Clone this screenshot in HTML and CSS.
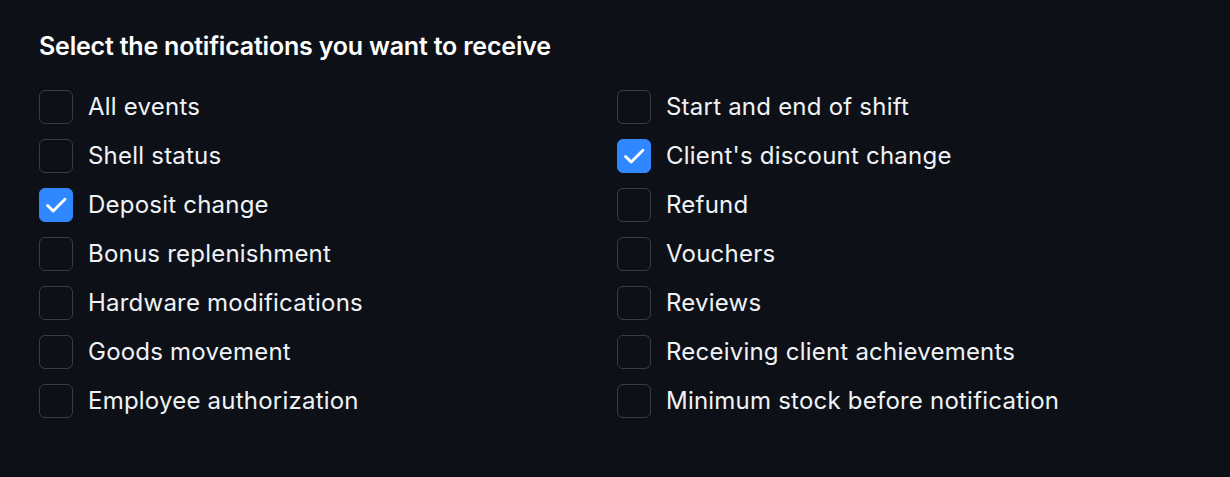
FILE: index.html
```html
<!DOCTYPE html>
<html>
<head>
<meta charset="utf-8">
<link rel="stylesheet" href="styles.css">
</head>
<body>
<div class="panel">
  <h2 class="title">Select the notifications you want to receive</h2>
  <div class="grid">
    <div class="col">
      <label class="item"><span class="box"></span><span class="text">All events</span></label>
      <label class="item"><span class="box"></span><span class="text">Shell status</span></label>
      <label class="item"><span class="box checked"><svg viewBox="0 0 34 34"><path d="M8 17.5l6 6L26.5 11" /></svg></span><span class="text">Deposit change</span></label>
      <label class="item"><span class="box"></span><span class="text">Bonus replenishment</span></label>
      <label class="item"><span class="box"></span><span class="text">Hardware modifications</span></label>
      <label class="item"><span class="box"></span><span class="text">Goods movement</span></label>
      <label class="item"><span class="box"></span><span class="text">Employee authorization</span></label>
    </div>
    <div class="col">
      <label class="item"><span class="box"></span><span class="text">Start and end of shift</span></label>
      <label class="item"><span class="box checked"><svg viewBox="0 0 34 34"><path d="M8 17.5l6 6L26.5 11" /></svg></span><span class="text">Client's discount change</span></label>
      <label class="item"><span class="box"></span><span class="text">Refund</span></label>
      <label class="item"><span class="box"></span><span class="text">Vouchers</span></label>
      <label class="item"><span class="box"></span><span class="text">Reviews</span></label>
      <label class="item"><span class="box"></span><span class="text">Receiving client achievements</span></label>
      <label class="item"><span class="box"></span><span class="text">Minimum stock before notification</span></label>
    </div>
  </div>
</div>
</body>
</html>
```
FILE: styles.css
```css
html, body {
  margin: 0;
  padding: 0;
  background: #0d1117;
  height: 100%;
}
body {
  font-family: Inter, "Noto Sans", sans-serif;
  color: #ffffff;
}
.panel {
  padding: 31px 39px 0 39px;
}
.title {
  margin: 0 0 29px 0;
  font-size: 25px;
  font-weight: 600;
  line-height: 30px;
  letter-spacing: -0.2px;
}
.grid {
  display: grid;
  grid-template-columns: 578px 1fr;
}
.col {
  display: flex;
  flex-direction: column;
  gap: 15px;
}
.item {
  display: flex;
  align-items: center;
  gap: 15px;
  height: 34px;
}
.box {
  box-sizing: border-box;
  width: 34px;
  height: 34px;
  border: 1px solid #383d45;
  border-radius: 6px;
  flex: none;
  display: flex;
}
.box.checked {
  background: #2f88ff;
  border-color: #2f88ff;
}
.box svg {
  width: 100%;
  height: 100%;
}
.box svg path {
  fill: none;
  stroke: #ffffff;
  stroke-width: 3;
  stroke-linecap: round;
  stroke-linejoin: round;
}
.text {
  font-size: 24px;
  line-height: 30px;
  letter-spacing: 0.22px;
  color: #f0f3f6;
}
```
